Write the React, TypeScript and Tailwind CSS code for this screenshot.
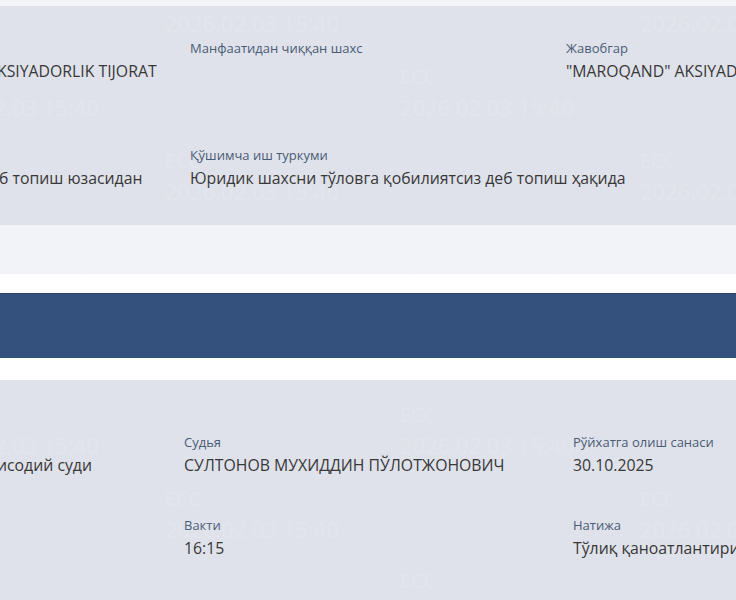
import React from "react";

const marks = [
  "left-[165px] top-[-22px]",
  "left-[640px] top-[-22px]",
  "left-[-75px] top-[62px]",
  "left-[400px] top-[62px]",
  "left-[165px] top-[146px]",
  "left-[640px] top-[146px]",
  "left-[-75px] top-[230px]",
  "left-[400px] top-[230px]",
  "left-[-75px] top-[400px]",
  "left-[400px] top-[400px]",
  "left-[165px] top-[484px]",
  "left-[640px] top-[484px]",
  "left-[400px] top-[566px]",
];

function Field({ label, value, shift = "" }: { label?: string; value: string; shift?: string }) {
  return (
    <div className={`whitespace-nowrap ${shift}`}>
      <div className="text-[13px] leading-[20px] text-[#4b5b76] h-[20px]">{label}</div>
      <div className="text-[15.8px] leading-[26px] text-[#383838]">{value}</div>
    </div>
  );
}

export default function App() {
  return (
    <div className="relative w-[736px] h-[600px] overflow-hidden bg-white font-['Open_Sans','Noto_Sans',sans-serif]">
      <div className="h-[6px] bg-[#f3f4f8]" />

      <section className="bg-[#dfe2ea] h-[219px] pt-[32px] flex flex-col gap-[61px]">
        <div className="flex">
          <div className="w-[190px] shrink-0">
            <Field value="KSIYADORLIK TIJORAT" shift="-ml-[3px]" />
          </div>
          <div className="w-[376px] shrink-0">
            <Field label="Манфаатидан чиққан шахс" value="" />
          </div>
          <Field label="Жавобгар" value={'"MAROQAND" AKSIYADORLIK JAMIYATI'} />
        </div>
        <div className="flex">
          <div className="w-[190px] shrink-0">
            <Field value="б топиш юзасидан" shift="-ml-[1px]" />
          </div>
          <Field
            label="Қўшимча иш туркуми"
            value="Юридик шахсни тўловга қобилиятсиз деб топиш ҳақида"
          />
        </div>
      </section>

      <div className="h-[49px] bg-[#f2f3f8]" />
      <div className="h-[19px] bg-white" />
      <div className="h-[65px] bg-[#34517e] border-t border-[#2b4168]" />
      <div className="h-[22px] bg-white" />

      <section className="bg-[#dfe2ea] h-[220px] pt-[52px] flex flex-col gap-[37px]">
        <div className="flex">
          <div className="w-[184px] shrink-0">
            <Field value="исодий суди" shift="-ml-[3px]" />
          </div>
          <div className="w-[389px] shrink-0">
            <Field label="Судья" value="СУЛТОНОВ МУХИДДИН ПЎЛОТЖОНОВИЧ" />
          </div>
          <Field label="Рўйхатга олиш санаси" value="30.10.2025" />
        </div>
        <div className="flex">
          <div className="w-[184px] shrink-0" />
          <div className="w-[389px] shrink-0">
            <Field label="Вакти" value="16:15" />
          </div>
          <Field label="Натижа" value="Тўлиқ қаноатлантирилди" />
        </div>
      </section>

      {marks.map((m) => (
        <div
          key={m}
          className={`pointer-events-none absolute ${m} text-white/10 whitespace-nowrap leading-[30px]`}
        >
          <div className="text-[20px]">ЕСС</div>
          <div className="text-[22px]">2026.02.03 15:40</div>
        </div>
      ))}
    </div>
  );
}
